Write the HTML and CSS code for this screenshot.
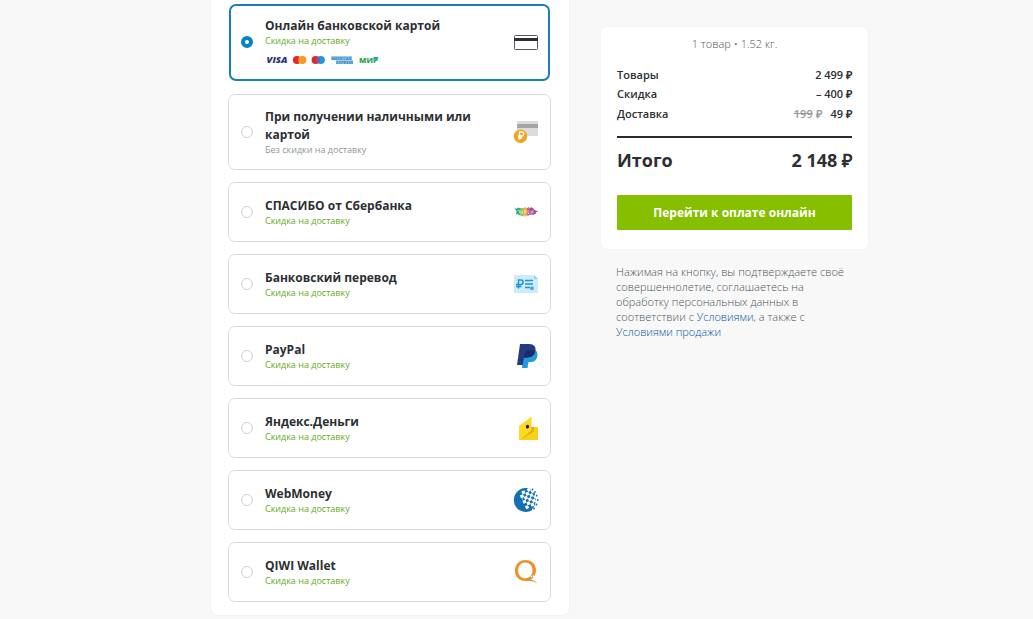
FILE: index.html
```html
<!DOCTYPE html>
<html lang="ru">
<head>
<meta charset="UTF-8">
<meta name="viewport" content="width=device-width, initial-scale=1">
<title>Оплата заказа</title>
<link rel="stylesheet" href="styles.css">
</head>
<body>
<div class="page">
  <form class="methods">
    <label class="method active">
      <input type="radio" name="pay" checked>
      <span class="info">
        <span class="name">Онлайн банковской картой</span>
        <span class="note">Скидка на доставку</span>
        <svg class="brands" width="116" height="10" viewBox="0 0 116 10">
          <text class="visa" x="1.5" y="8.3" textLength="21" lengthAdjust="spacingAndGlyphs">VISA</text>
          <circle cx="32" cy="5" r="4.1" fill="#e3262b"/>
          <circle cx="37.3" cy="5" r="4.1" fill="#f59a22"/>
          <circle cx="50.7" cy="5" r="4.1" fill="#e3262b"/>
          <circle cx="55.8" cy="5" r="4.1" fill="#1f9ad7"/>
          <path d="M51.7 1.9h3v6.2h-3z" fill="#7b5aa8"/>
          <path d="M66 1h21v4h1v4H71V5h-5z" fill="#9ccbee"/>
          <text class="amex" x="66.5" y="4.7" textLength="20" lengthAdjust="spacingAndGlyphs">AMERICAN</text>
          <text class="amex" x="71" y="8.8" textLength="17" lengthAdjust="spacingAndGlyphs">EXPRESS</text>
          <text class="mir" x="94" y="7.8" textLength="19" lengthAdjust="spacingAndGlyphs">МИР</text>
          <path d="M108.5 2h5q-.2 2.2-2.4 2.4h-2.6z" fill="#25a3a5"/>
        </svg>
      </span>
      <svg class="icon" width="26" height="26" viewBox="0 0 26 26">
        <rect x="1.5" y="6.5" width="23" height="14" rx="1" fill="#fff" stroke="#555b60"/>
        <path d="M1 9h24v3H1z" fill="#2c2f33"/>
      </svg>
    </label>

    <label class="method">
      <input type="radio" name="pay">
      <span class="info">
        <span class="name">При получении наличными или картой</span>
        <span class="note gray">Без скидки на доставку</span>
      </span>
      <svg class="icon" width="26" height="26" viewBox="0 0 26 26">
        <path d="M4 2h21v15H4z" fill="#dcdcdc"/>
        <path d="M4 5h21v4H4z" fill="#a5a5a5"/>
        <circle cx="7.5" cy="17.2" r="6.7" fill="#f5a31c"/>
        <path d="M6.5 21v-8h2.2q2 .1 2 2t-2 2H5M5 19h4" fill="none" stroke="#fff" stroke-width="1.4"/>
      </svg>
    </label>

    <label class="method">
      <input type="radio" name="pay">
      <span class="info">
        <span class="name">СПАСИБО от Сбербанка</span>
        <span class="note">Скидка на доставку</span>
      </span>
      <svg class="icon" width="26" height="26" viewBox="0 0 26 26">
        <path d="M1.5 9l2 .8L5 8.5l3 1v6l-2 1-1-1.5-2 .5.5-3z" fill="#2fae85"/>
        <path d="M7 9.5l2-.8 2 1v6l-1.5 1.8L7 16z" fill="#8cc152"/>
        <path d="M10.5 9l1.5-1 2 1.5V16l-2 2-1.5-2z" fill="#f3b535"/>
        <path d="M13.5 9.5l2-1.5L17 9.5v6L15 17l-1.5-1z" fill="#e4607a"/>
        <path d="M16.5 9l2-.7L21 10v6l-2-.5-2.5.5z" fill="#8a56a5"/>
        <path d="M20.5 10l2 1.5 2.5.8-2 1.2-.5 1.5-2 .5z" fill="#a34d8f"/>
        <path d="M4.5 11.5h2v3M8 11.5v3h1.500v-3M11.5 14.5v-3H13v3M15 11.5v3h1.5M18 11.5v3l2-3v3" stroke="#fff" stroke-width=".7" stroke-opacity=".75" fill="none"/>
      </svg>
    </label>

    <label class="method">
      <input type="radio" name="pay">
      <span class="info">
        <span class="name">Банковский перевод</span>
        <span class="note">Скидка на доставку</span>
      </span>
      <svg class="icon" width="26" height="26" viewBox="0 0 26 26">
        <path d="M1 4h20l4 4v14H1z" fill="#cdebf9"/>
        <path d="M21 4v4h4z" fill="#94d2ed"/>
        <path d="M5.5 17.5V9h2.6q2 .2 2 2.2t-2 2.3H3M3 15.5h5.5" fill="none" stroke="#2495c8" stroke-width="1.5"/>
        <path d="M12 9.5h8M12 13h8M12 16.5h5" stroke="#2495c8" stroke-width="1.6"/>
        <circle cx="19" cy="17.2" r="2" fill="#4daed8"/>
      </svg>
    </label>

    <label class="method">
      <input type="radio" name="pay">
      <span class="info">
        <span class="name">PayPal</span>
        <span class="note">Скидка на доставку</span>
      </span>
      <svg class="icon" width="26" height="26" viewBox="0 0 26 26">
        <path d="M10 7h12.5q3 3 1.5 7.5-1.5 4.5-6.500 4.5h-2l-1 6H9z" fill="#229bd8"/>
        <path d="M7 1h9.5q6.5.3 6 6-1 7.5-8.500 7.5h-3L9.7 22H4z" fill="#253b80"/>
        <path d="M22.3 7.5q-1.200 7-8.300 7h-3l1-4.700q.4-2.300 2.600-2.300z" fill="#20286d"/>
      </svg>
    </label>

    <label class="method">
      <input type="radio" name="pay">
      <span class="info">
        <span class="name">Яндекс.Деньги</span>
        <span class="note">Скидка на доставку</span>
      </span>
      <svg class="icon" width="26" height="26" viewBox="0 0 26 26">
        <path d="M6 12h19v13H6z" fill="#f9d116"/>
        <path d="M6 11L18.5 1.5v14L7 25H6z" fill="#fedb22"/>
        <path d="M7.5 24.5l11-9V12H21v4.5l-10 6z" fill="#dfae0c"/>
        <ellipse cx="14.5" cy="11.7" rx="1.6" ry="1.9" transform="rotate(20 14.5 11.7)" fill="#1c1a0c"/>
      </svg>
    </label>

    <label class="method">
      <input type="radio" name="pay">
      <span class="info">
        <span class="name">WebMoney</span>
        <span class="note">Скидка на доставку</span>
      </span>
      <svg class="icon" width="26" height="26" viewBox="0 0 26 26">
        <path d="M18 2.2A12 12 0 1 0 19 23.300L14 23 9 13 12 4z" fill="#1470b3"/>
        <path d="M12 3l5-1 4 3 2 5-1 8-4 6-5-1-4-9z" fill="#1470b3"/>
        <g transform="rotate(-25 15 13)" fill="#fff">
          <rect x="12.5" y="2.5" width="3.2" height="3.2"/>
          <rect x="18.5" y="2.5" width="3.2" height="3.2"/>
          <rect x="9.5" y="5.5" width="3.2" height="3.2"/>
          <rect x="15.5" y="5.5" width="3.2" height="3.2"/>
          <rect x="21.5" y="5.5" width="3.2" height="3.2"/>
          <rect x="12.5" y="8.5" width="3.2" height="3.2"/>
          <rect x="18.5" y="8.5" width="3.2" height="3.2"/>
          <rect x="9.5" y="11.5" width="3.2" height="3.2"/>
          <rect x="15.5" y="11.5" width="3.2" height="3.2"/>
          <rect x="21.5" y="11.5" width="3.2" height="3.2"/>
          <rect x="12.5" y="14.5" width="3.2" height="3.2"/>
          <rect x="18.5" y="14.5" width="3.2" height="3.2"/>
          <rect x="9.5" y="17.5" width="3.2" height="3.2"/>
          <rect x="15.5" y="17.5" width="3.2" height="3.2"/>
        </g>
        <g fill="#1470b3">
          <circle cx="19.5" cy="2.5" r=".9"/>
          <circle cx="22" cy="5" r=".9"/>
          <circle cx="23.7" cy="8.7" r=".9"/>
          <circle cx="24.7" cy="13" r=".9"/>
          <circle cx="23.5" cy="17.5" r=".9"/>
          <circle cx="21" cy="21.5" r=".9"/>
        </g>
      </svg>
    </label>

    <label class="method">
      <input type="radio" name="pay">
      <span class="info">
        <span class="name">QIWI Wallet</span>
        <span class="note">Скидка на доставку</span>
      </span>
      <svg class="icon" width="26" height="26" viewBox="0 0 26 26">
        <path fill-rule="evenodd" d="M12.5 1C19 1 23 5.500 23 11.500q0 3-1.500 5.500l-1.500-1q-.5 1.500 0 3-3 3-7.500 3C6 22 2 17.500 2 11.500S6.500 1 12.500 1zM12 3.500c-4.500.2-7 4-6.800 8.200.2 4.800 3.300 7.800 7.300 7.600 4.500-.3 7.200-3.800 7-8.300C19.300 6.300 16 3.300 12 3.500z" fill="#ee9225"/>
        <path d="M14 20.300q6-.5 10.500 4-4.500-3-10.500-2.500z" fill="#b79a68"/>
        <circle cx="18.5" cy="17.5" r=".8" fill="#fff"/>
      </svg>
    </label>
  </form>

  <div class="side">
    <div class="summary">
      <div class="count">1 товар • 1.52 кг.</div>
      <div class="row"><span>Товары</span><span>2 499 ₽</span></div>
      <div class="row"><span>Скидка</span><span>– 400 ₽</span></div>
      <div class="row"><span>Доставка</span><span><span class="old"><s>199</s> ₽</span>49 ₽</span></div>
      <div class="total"><span>Итого</span><span>2 148 ₽</span></div>
      <button type="button">Перейти к оплате онлайн</button>
    </div>
    <p class="terms">Нажимая на кнопку, вы подтверждаете своё<br>совершеннолетие, соглашаетесь на<br>обработку персональных данных в<br>соответствии с <a href="#">Условиями</a>, а также с<br><a href="#">Условиями продажи</a></p>
  </div>
</div>
</body>
</html>
```

FILE: styles.css
```css
* { box-sizing: border-box; }
body { margin: 0; background: #f8f8f8; font-family: "Open Sans", sans-serif; color: #2c2f33; overflow: hidden; }
.page { display: flex; align-items: flex-start; gap: 32px; padding-left: 211px; height: 619px; }

.methods { width: 358px; height: 615px; padding: 4px 18px 0 17px; background: #fff; border-radius: 0 0 7px 7px; box-shadow: 0 0 2px rgba(0,0,0,0.08); }
.method { display: flex; align-items: center; height: 60px; margin-bottom: 12px; padding: 0 11px 0 12px; border: 1px solid #d9dcde; border-radius: 7px; cursor: pointer; }
.method.active { height: 77px; margin: 0 1px 13px 1px; padding: 0 9px 2px 10px; border: 2px solid #1680b0; }
.method.active + .method { height: 76px; }
.method input { appearance: none; flex: none; width: 12px; height: 12px; margin: 0 12px 0 0; border: 1px solid #cbd2d3; border-radius: 50%; background: #fff; }
.method input:checked { border: 4px solid #0784be; }
.info { flex: 1; display: flex; flex-direction: column; }
.name { font-size: 12px; line-height: 18px; font-weight: 700; max-width: 225px; }
.note { font-size: 9px; line-height: 12px; padding-bottom: 1px; color: #65ac20; }
.note.gray { color: #8f9698; }
.active .info { padding-bottom: 2px; }
.brands { margin-top: 7px; }
.icon { flex: none; }
.visa { font-size: 8.5px; font-weight: 800; font-style: italic; fill: #2b3285; }
.amex { font-size: 4px; font-weight: 700; fill: #3386bd; }
.mir { font-size: 7.5px; font-weight: 800; fill: #35a853; }

.side { width: 267px; padding-top: 27px; }
.summary { height: 222px; padding: 8px 16px 0 16px; background: #fff; border-radius: 6px; box-shadow: 0 0 2px rgba(0,0,0,0.06); }
.count { margin-bottom: 13px; font-size: 11px; line-height: 17px; font-weight: 300; text-align: center; color: #4c5658; }
.row { display: flex; justify-content: space-between; font-size: 11px; line-height: 19.4px; font-weight: 600; }
.old { margin-right: 9px; color: #979b9d; }
.total { display: flex; justify-content: space-between; margin-top: 12.8px; padding-top: 9px; border-top: 2px solid #2c2c30; font-size: 18px; line-height: 26px; font-weight: 700; }
button { display: block; width: 100%; height: 35px; margin-top: 22px; padding: 0; border: none; border-radius: 1px; background: #86be00; color: #fff; font: 700 12px "Open Sans", sans-serif; cursor: pointer; }
.terms { margin: 15px 0 0 15px; font-size: 11px; line-height: 15px; font-weight: 300; color: #4c5658; white-space: nowrap; }
.terms a { color: #00559c; text-decoration: none; }
```
